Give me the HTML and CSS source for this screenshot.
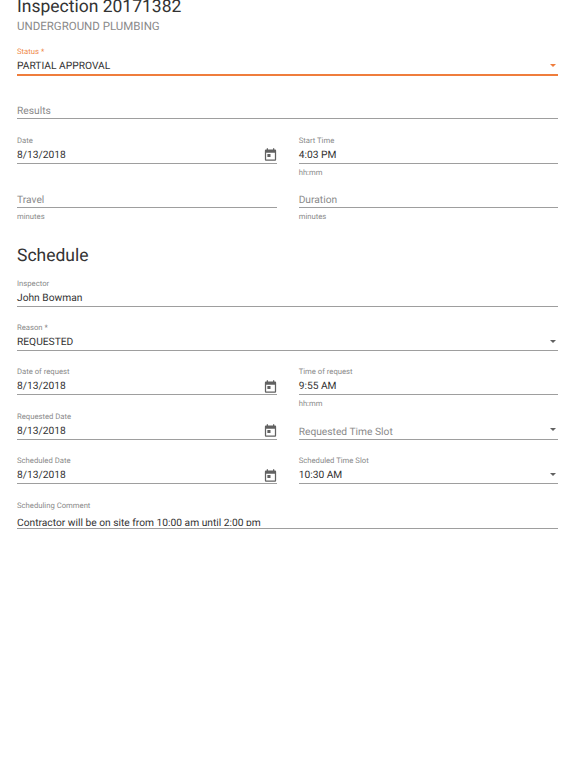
FILE: index.html
```html
<!DOCTYPE html>
<html lang="en">
<head>
<meta charset="UTF-8">
<meta name="viewport" content="width=device-width, initial-scale=1.0">
<title>Inspection 20171382</title>
<link rel="stylesheet" href="styles.css">
</head>
<body>

<svg class="icon-defs" width="0" height="0" aria-hidden="true">
  <symbol id="calendar" viewBox="0 0 24 24">
    <path d="M19 4h-1V2h-2v2H8V2H6v2H5c-1.1 0-2 .9-2 2v14c0 1.1.9 2 2 2h14c1.1 0 2-.9 2-2V6c0-1.1-.9-2-2-2zm0 16H5V9h14v11zM7 11h5v5H7z"/>
  </symbol>
</svg>

<main class="form">

  <!-- Header -->
  <h1 class="title">Inspection 20171382</h1>
  <p class="subtitle">UNDERGROUND PLUMBING</p>

  <div class="field field-active">
    <label class="field-label">Status *</label>
    <div class="control"><span class="value">PARTIAL APPROVAL</span><span class="arrow"></span></div>
  </div>

  <div class="field">
    <div class="control"><span class="placeholder">Results</span></div>
  </div>

  <div class="row">
    <div class="field">
      <label class="field-label">Date</label>
      <div class="control"><span class="value">8/13/2018</span><svg class="calendar"><use href="#calendar"/></svg></div>
    </div>
    <div class="field">
      <label class="field-label">Start Time</label>
      <div class="control"><span class="value">4:03 PM</span></div>
      <div class="helper">hh:mm</div>
    </div>
  </div>

  <div class="row">
    <div class="field">
      <div class="control"><span class="placeholder">Travel</span></div>
      <div class="helper">minutes</div>
    </div>
    <div class="field">
      <div class="control"><span class="placeholder">Duration</span></div>
      <div class="helper">minutes</div>
    </div>
  </div>

  <!-- Schedule section -->
  <h2 class="section-title">Schedule</h2>

  <div class="field">
    <label class="field-label">Inspector</label>
    <div class="control"><span class="value">John Bowman</span></div>
  </div>

  <div class="field">
    <label class="field-label">Reason *</label>
    <div class="control"><span class="value">REQUESTED</span><span class="arrow"></span></div>
  </div>

  <div class="row">
    <div class="field">
      <label class="field-label">Date of request</label>
      <div class="control"><span class="value">8/13/2018</span><svg class="calendar"><use href="#calendar"/></svg></div>
    </div>
    <div class="field">
      <label class="field-label">Time of request</label>
      <div class="control"><span class="value">9:55 AM</span></div>
      <div class="helper">hh:mm</div>
    </div>
  </div>

  <div class="row">
    <div class="field">
      <label class="field-label">Requested Date</label>
      <div class="control"><span class="value">8/13/2018</span><svg class="calendar"><use href="#calendar"/></svg></div>
    </div>
    <div class="field">
      <div class="control"><span class="placeholder">Requested Time Slot</span><span class="arrow"></span></div>
    </div>
  </div>

  <div class="row">
    <div class="field">
      <label class="field-label">Scheduled Date</label>
      <div class="control"><span class="value">8/13/2018</span><svg class="calendar"><use href="#calendar"/></svg></div>
    </div>
    <div class="field">
      <label class="field-label">Scheduled Time Slot</label>
      <div class="control"><span class="value">10:30 AM</span><span class="arrow"></span></div>
    </div>
  </div>

  <div class="field">
    <label class="field-label">Scheduling Comment</label>
    <div class="control control-clipped"><span class="value">Contractor will be on site from 10:00 am until 2:00 pm</span></div>
  </div>

</main>

</body>
</html>
```

FILE: styles.css
```css
/* Page */
html, body {
  height: 100%;
}

body {
  margin: 0;
  overflow: hidden;
  background-color: #fff;
  color: #333;
  font-family: Roboto, "Liberation Sans", sans-serif;
  text-rendering: geometricPrecision;
}

.icon-defs {
  position: absolute;
}

.form {
  padding: 0 17.7px 0 17px;
}

/* Headings */
.title {
  margin: -5px 0 0;
  font-size: 17.5px;
  font-weight: 400;
  line-height: 24px;
}

.subtitle {
  margin: 0 0 12px;
  color: #8a8a8a;
  font-size: 11.5px;
  line-height: 14px;
}

.section-title {
  margin: 21.6px 0 8.5px;
  font-size: 17.5px;
  font-weight: 400;
  line-height: 24px;
}

/* Form rows */
.row {
  display: grid;
  grid-template-columns: 1fr 1fr;
  column-gap: 22px;
}

.field {
  display: flex;
  flex-direction: column;
  justify-content: flex-start;
  height: 44.4px;
}

.field-label {
  height: 13px;
  color: #8a8a8a;
  font-size: 7.7px;
  line-height: 14px;
}

.control {
  display: flex;
  flex: none;
  align-items: center;
  justify-content: space-between;
  height: 16px;
  border-bottom: 1px solid #9e9e9e;
  font-size: 10.24px;
  line-height: 16px;
}

/* Fields without a label keep the text on the same baseline */
.field > .control:first-child {
  margin-top: 13px;
}

.placeholder {
  margin-top: 2px;
  color: #8a8a8a;
}

.helper {
  margin-top: 3px;
  color: #8a8a8a;
  font-size: 7.7px;
  line-height: 11px;
}

/* Select arrow */
.arrow {
  width: 0;
  height: 0;
  margin-right: 2.3px;
  margin-bottom: 2px;
  border-top: 3.5px solid #616161;
  border-right: 3.5px solid transparent;
  border-left: 3.5px solid transparent;
}

.calendar {
  flex: none;
  width: 15px;
  height: 15px;
  margin-right: -1px;
  fill: #616161;
}

/* Focused select */
.field-active .field-label {
  color: #ef8a4b;
}

.field-active .control {
  border-bottom: 2px solid #ef7d3c;
}

.field-active .arrow {
  border-top-color: #ef7d3c;
}

/* Comment text is cut off just above its underline */
.control-clipped {
  align-items: flex-start;
}

.control-clipped .value {
  height: 9.5px;
  margin-top: 5px;
  overflow: hidden;
  line-height: 11px;
}
```
